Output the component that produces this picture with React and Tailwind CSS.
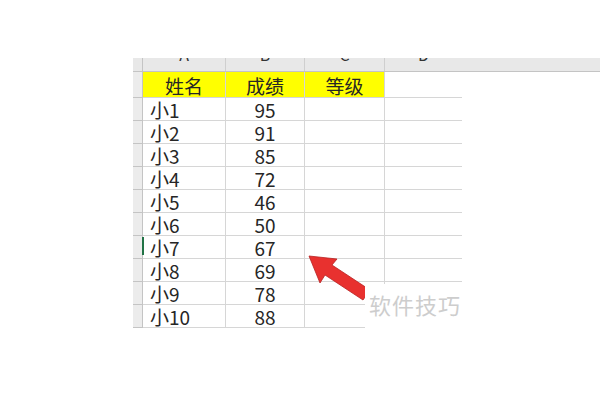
const cols = [
  { key: 'A', w: 'w-[83px]' },
  { key: 'B', w: 'w-[79px]' },
  { key: 'C', w: 'w-[80px]' },
  { key: 'D', w: 'w-[77px]' },
];

const rows = [
  ['小1', '95'],
  ['小2', '91'],
  ['小3', '85'],
  ['小4', '72'],
  ['小5', '46'],
  ['小6', '50'],
  ['小7', '67'],
  ['小8', '69'],
  ['小9', '78'],
  ['小10', '88'],
];

const font = { fontFamily: '"Noto Sans CJK SC", "Noto Sans", sans-serif' };

export default function App() {
  return (
    <div className="relative w-[600px] h-[400px] bg-white overflow-hidden text-[#262626]" style={font}>
      <div className="flex flex-col pt-[58px] pl-[133px]">
        {/* column letters, cut off at the top */}
        <div className="flex h-[14px] bg-[#e8e8e8] border-b border-[#c4c4c4]">
          <div className="w-[10px] border-r border-[#c4c4c4]" />
          {cols.map((c, i) => (
            <div
              key={c.key}
              className={`${c.w} overflow-hidden flex justify-center ${i < 3 ? 'border-r border-[#cfcfcf]' : ''}`}
            >
              <span className="text-[16px] leading-none -mt-[12px] text-[#333]">{c.key}</span>
            </div>
          ))}
        </div>

        {/* header row */}
        <div className="flex h-[26px]">
          <div className="w-[10px] bg-[#ececec] border-r border-b border-[#c4c4c4]" />
          <div className="w-[83px] bg-[#ffff00] border-r border-b border-[#d6d6d6] flex items-end justify-center pb-[2px] text-[19px] leading-none">姓名</div>
          <div className="w-[79px] bg-[#ffff00] border-r border-b border-[#d6d6d6] flex items-end justify-center pb-[2px] text-[19px] leading-none">成绩</div>
          <div className="w-[80px] bg-[#ffff00] border-r border-b border-[#d6d6d6] flex items-end justify-center pb-[2px] text-[19px] leading-none">等级</div>
          <div className="w-[77px] border-b border-[#d6d6d6]" />
        </div>

        {rows.map(([name, score], i) => (
          <div key={name} className="flex h-[23px]">
            <div className="relative w-[10px] bg-[#ececec] border-r border-b border-[#c4c4c4]">
              {i === 6 && <div className="absolute right-[-2px] top-[1px] w-[2px] h-[18px] bg-[#217346]" />}
            </div>
            <div className="w-[83px] border-r border-b border-[#d6d6d6] flex items-end pl-[7px] text-[19px] leading-[20px]">{name}</div>
            <div className="w-[79px] border-r border-b border-[#d6d6d6] flex items-end justify-center text-[19px] leading-[20px]">{score}</div>
            <div className="w-[80px] border-r border-b border-[#d6d6d6]" />
            <div className="w-[77px] border-b border-[#d6d6d6]" />
          </div>
        ))}
      </div>

      {/* red arrow */}
      <svg className="absolute left-0 top-0 w-[600px] h-[400px]" viewBox="0 0 600 400">
        <polygon
          points="309,256 337,259 332,265 370,290 363,300 325,275 320,283"
          fill="#e8312f"
          stroke="#b82222"
          strokeWidth="0.8"
          strokeLinejoin="round"
        />
      </svg>

      {/* watermark */}
      <div className="absolute left-[365px] top-[284px] w-[104px] h-[50px] bg-white flex items-start pl-[4px] pt-[9px]">
        <span className="text-[22px] leading-none text-[#cdcdcd] tracking-[1px]">软件技巧</span>
      </div>
    </div>
  );
}
